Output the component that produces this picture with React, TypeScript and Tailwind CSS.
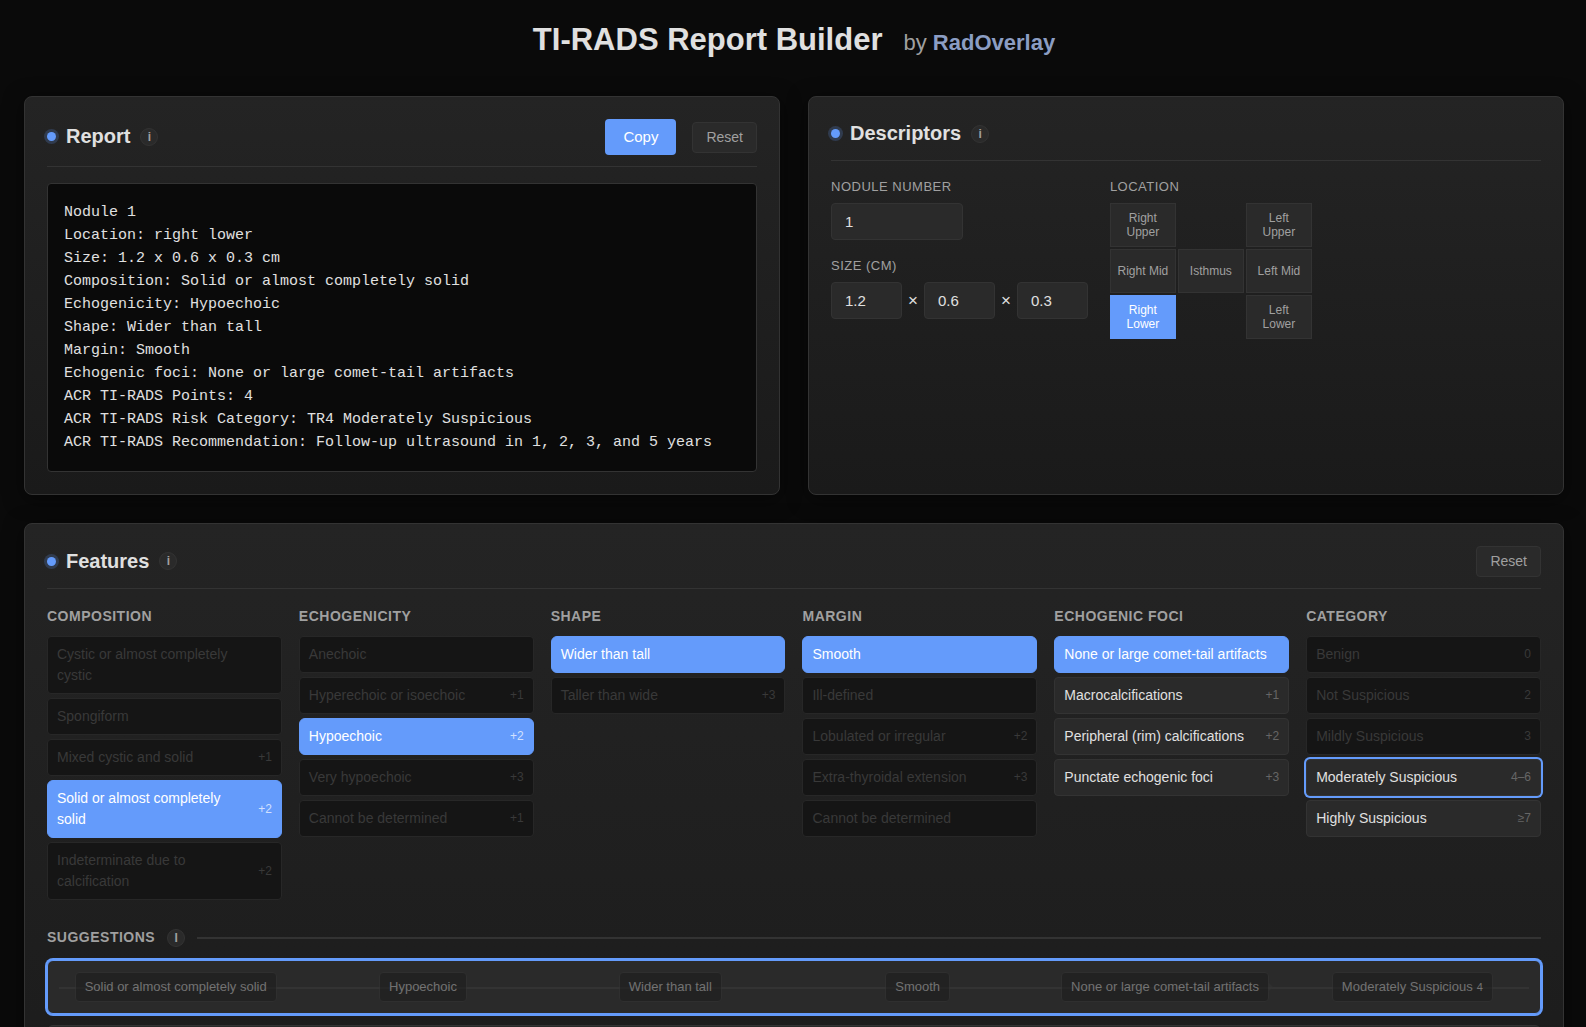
import React, { useState } from 'react';
import clsx from 'clsx';

interface Option {
  label: string;
  points?: string;
  state?: 'selected' | 'dimmed' | 'outlined';
}

interface Group {
  title: string;
  options: Option[];
}

const groups: Group[] = [
  {
    title: 'Composition',
    options: [
      { label: 'Cystic or almost completely cystic', state: 'dimmed' },
      { label: 'Spongiform', state: 'dimmed' },
      { label: 'Mixed cystic and solid', points: '+1', state: 'dimmed' },
      { label: 'Solid or almost completely solid', points: '+2', state: 'selected' },
      { label: 'Indeterminate due to calcification', points: '+2', state: 'dimmed' },
    ],
  },
  {
    title: 'Echogenicity',
    options: [
      { label: 'Anechoic', state: 'dimmed' },
      { label: 'Hyperechoic or isoechoic', points: '+1', state: 'dimmed' },
      { label: 'Hypoechoic', points: '+2', state: 'selected' },
      { label: 'Very hypoechoic', points: '+3', state: 'dimmed' },
      { label: 'Cannot be determined', points: '+1', state: 'dimmed' },
    ],
  },
  {
    title: 'Shape',
    options: [
      { label: 'Wider than tall', state: 'selected' },
      { label: 'Taller than wide', points: '+3', state: 'dimmed' },
    ],
  },
  {
    title: 'Margin',
    options: [
      { label: 'Smooth', state: 'selected' },
      { label: 'Ill-defined', state: 'dimmed' },
      { label: 'Lobulated or irregular', points: '+2', state: 'dimmed' },
      { label: 'Extra-thyroidal extension', points: '+3', state: 'dimmed' },
      { label: 'Cannot be determined', state: 'dimmed' },
    ],
  },
  {
    title: 'Echogenic foci',
    options: [
      { label: 'None or large comet-tail artifacts', state: 'selected' },
      { label: 'Macrocalcifications', points: '+1' },
      { label: 'Peripheral (rim) calcifications', points: '+2' },
      { label: 'Punctate echogenic foci', points: '+3' },
    ],
  },
  {
    title: 'Category',
    options: [
      { label: 'Benign', points: '0', state: 'dimmed' },
      { label: 'Not Suspicious', points: '2', state: 'dimmed' },
      { label: 'Mildly Suspicious', points: '3', state: 'dimmed' },
      { label: 'Moderately Suspicious', points: '4–6', state: 'outlined' },
      { label: 'Highly Suspicious', points: '≥7' },
    ],
  },
];

const reportText = `Nodule 1
Location: right lower
Size: 1.2 x 0.6 x 0.3 cm
Composition: Solid or almost completely solid
Echogenicity: Hypoechoic
Shape: Wider than tall
Margin: Smooth
Echogenic foci: None or large comet-tail artifacts
ACR TI-RADS Points: 4
ACR TI-RADS Risk Category: TR4 Moderately Suspicious
ACR TI-RADS Recommendation: Follow-up ultrasound in 1, 2, 3, and 5 years`;

// null keeps an empty cell in the 3x3 thyroid map
const locations: (string | null)[] = [
  'Right Upper', null, 'Left Upper',
  'Right Mid', 'Isthmus', 'Left Mid',
  'Right Lower', null, 'Left Lower',
];

const suggestion = [
  'Solid or almost completely solid',
  'Hypoechoic',
  'Wider than tall',
  'Smooth',
  'None or large comet-tail artifacts',
  'Moderately Suspicious',
];

const inputClass =
  'h-[37px] rounded border border-[#333333] bg-[#2a2a2a] px-[13px] text-[15px] text-[#e0e0e0] outline-none';
const labelClass = 'block text-[13px] leading-5 tracking-[0.5px] text-[#a0a0a0] uppercase';

function InfoButton({ text = 'i' }: { text?: string }) {
  return (
    <button
      aria-label="More information"
      className="flex size-[18px] shrink-0 items-center justify-center rounded-full border border-[#333333] bg-[#2a2a2a] text-[12px] leading-none font-bold text-[#a0a0a0]"
    >
      {text}
    </button>
  );
}

function Panel({ title, actions, children }: {
  title: string;
  actions?: React.ReactNode;
  children: React.ReactNode;
}) {
  return (
    <section className="rounded-lg border border-[#333333] bg-linear-to-b from-[#242424] to-[#1a1a1a] p-[22px] shadow-[0_4px_20px_rgba(0,0,0,0.5)]">
      <div className="mb-4 flex items-center justify-between border-b border-[#333333] pb-[11px]">
        <div className="flex items-center gap-[10px] pb-px">
          <span className="size-[9px] rounded-full bg-[#649bfb] shadow-[0_0_0_3px_rgba(100,155,251,0.2)]" />
          <h2 className="text-[20px] leading-[29px] font-bold text-[#e0e0e0]">{title}</h2>
          <InfoButton />
        </div>
        {actions && <div className="flex items-center gap-4">{actions}</div>}
      </div>
      {children}
    </section>
  );
}

function ResetButton() {
  return (
    <button className="h-[31px] rounded border border-[#333333] bg-[#2a2a2a] px-[13px] text-[14px] text-[#a0a0a0]">
      Reset
    </button>
  );
}

function OptionButton({ option }: { option: Option }) {
  const { label, points, state } = option;
  return (
    <button
      className={clsx(
        'flex w-full items-center justify-between gap-2 border px-[9px] py-[7px] text-left text-[14px] leading-[21px]',
        state === 'selected' && 'rounded-md border-[#649bfb] bg-[#649bfb] text-white',
        state === 'dimmed' && 'rounded border-[#272727] bg-[#151515] text-[#393939]',
        state === 'outlined' && 'rounded border-[#333333] bg-[#2a2a2a] text-[#e0e0e0] ring-2 ring-[#649bfb]',
        !state && 'rounded border-[#333333] bg-[#2a2a2a] text-[#e0e0e0]',
      )}
    >
      <span>{label}</span>
      <span
        className={clsx(
          'text-[12px]',
          state === 'selected' && 'text-[#d1e0fe]',
          state === 'dimmed' && 'text-[#393939]',
          (!state || state === 'outlined') && 'text-[#666666]',
        )}
      >
        {points}
      </span>
    </button>
  );
}

export default function App() {
  const [location, setLocation] = useState('Right Lower');
  const [nodule, setNodule] = useState('1');
  const [size, setSize] = useState(['1.2', '0.6', '0.3']);

  return (
    <div className="h-screen overflow-hidden bg-[#0a0a0a] pr-[22px] pl-6 font-['Liberation_Sans',Arial,sans-serif] text-[#e0e0e0]">
      <header className="flex items-baseline justify-center gap-[21px] pt-[17px] pb-[33px]">
        <h1 className="text-[31px] leading-[46px] font-bold">TI-RADS Report Builder</h1>
        <span className="text-[22px] text-[#a0a0a0]">
          by <a href="#" className="font-bold text-[#8b9dc3]">RadOverlay</a>
        </span>
      </header>

      <main className="flex flex-col gap-7">
        <div className="grid grid-cols-2 gap-7">
          <Panel
            title="Report"
            actions={
              <>
                <button className="h-9 rounded bg-[#649bfb] px-[18px] text-[15px] text-white">Copy</button>
                <ResetButton />
              </>
            }
          >
            <pre className="rounded border border-[#333333] bg-[#0a0a0a] px-4 py-[17px] font-['Liberation_Mono',monospace] text-[15px] leading-[23px] whitespace-pre-wrap">
              {reportText}
            </pre>
          </Panel>

          <Panel title="Descriptors">
            <div className="flex gap-[22px]">
              <div>
                <label htmlFor="nodule" className={labelClass}>Nodule number</label>
                <input
                  id="nodule"
                  value={nodule}
                  onChange={(e) => setNodule(e.target.value)}
                  className={clsx(inputClass, 'mt-[6px] w-[132px]')}
                />
                <label htmlFor="size-0" className={clsx(labelClass, 'mt-4')}>Size (cm)</label>
                <div className="mt-[6px] flex items-center gap-[6px]">
                  {size.map((value, i) => (
                    <React.Fragment key={i}>
                      {i > 0 && <span className="text-[17px]">×</span>}
                      <input
                        id={`size-${i}`}
                        aria-label={`Size ${i + 1} in cm`}
                        value={value}
                        onChange={(e) => setSize(size.map((v, j) => (j === i ? e.target.value : v)))}
                        className={clsx(inputClass, 'w-[71px]')}
                      />
                    </React.Fragment>
                  ))}
                </div>
              </div>

              <div>
                <div className={labelClass}>Location</div>
                <div className="mt-[6px] grid grid-cols-[66px_66px_66px] gap-[2px]">
                  {locations.map((name, i) =>
                    name ? (
                      <button
                        key={name}
                        onClick={() => setLocation(name)}
                        className={clsx(
                          'h-11 border px-1 text-[12px] leading-[14px]',
                          name === location
                            ? 'border-[#649bfb] bg-[#649bfb] text-white'
                            : 'border-[#333333] bg-[#2a2a2a] text-[#a0a0a0]',
                        )}
                      >
                        {name}
                      </button>
                    ) : (
                      <span key={i} />
                    ),
                  )}
                </div>
              </div>
            </div>
          </Panel>
        </div>

        <Panel title="Features" actions={<ResetButton />}>
          <div className="grid grid-cols-6 gap-[17px]">
            {groups.map((group) => (
              <div key={group.title}>
                <h3 className="mb-2 text-[14px] leading-[23px] font-bold tracking-[0.5px] text-[#a0a0a0] uppercase">
                  {group.title}
                </h3>
                <div className="flex flex-col gap-1">
                  {group.options.map((option) => (
                    <OptionButton key={option.label} option={option} />
                  ))}
                </div>
              </div>
            ))}
          </div>

          <div className="mt-[26px] mb-[11px] flex items-center gap-3">
            <h3 className="text-[14px] leading-[23px] font-bold tracking-[0.5px] text-[#a0a0a0] uppercase">Suggestions</h3>
            <InfoButton text="I" />
            <div className="h-[2px] flex-1 bg-[#333333]" />
          </div>

          <div className="relative rounded-md border border-[#649bfb] bg-[#2a2a2a] px-1 py-[11px] ring-2 ring-[#649bfb]">
            {/* connector running behind the chips */}
            <div className="absolute inset-x-[11px] top-1/2 h-[2px] bg-[#333333]" />
            <div className="relative grid grid-cols-6">
              {suggestion.map((name, i) => (
                <div key={name} className="flex justify-center">
                  <button className="relative h-[30px] rounded border border-[#333333] bg-[#1e1e1e] px-[9px] text-[13px] whitespace-nowrap text-[#a0a0a0] opacity-60">
                    {name}
                    {i === 5 && <span className="ml-1 text-[11px]">4</span>}
                    {i === 4 && (
                      <svg className="absolute top-1/2 left-full -translate-y-1/2" width="5" height="10" viewBox="0 0 5 10">
                        <path d="M0 0L5 5L0 10Z" fill="#333333" />
                      </svg>
                    )}
                  </button>
                </div>
              ))}
            </div>
          </div>
          <div className="mt-[11px] h-[54px] rounded-md border border-[#333333] bg-[#2a2a2a]" />
          <div className="mt-[11px] h-[54px] rounded-md border border-[#333333] bg-[#2a2a2a]" />
          <div className="mt-[11px] h-[54px] rounded-md border border-[#333333] bg-[#2a2a2a]" />
        </Panel>
      </main>
    </div>
  );
}
